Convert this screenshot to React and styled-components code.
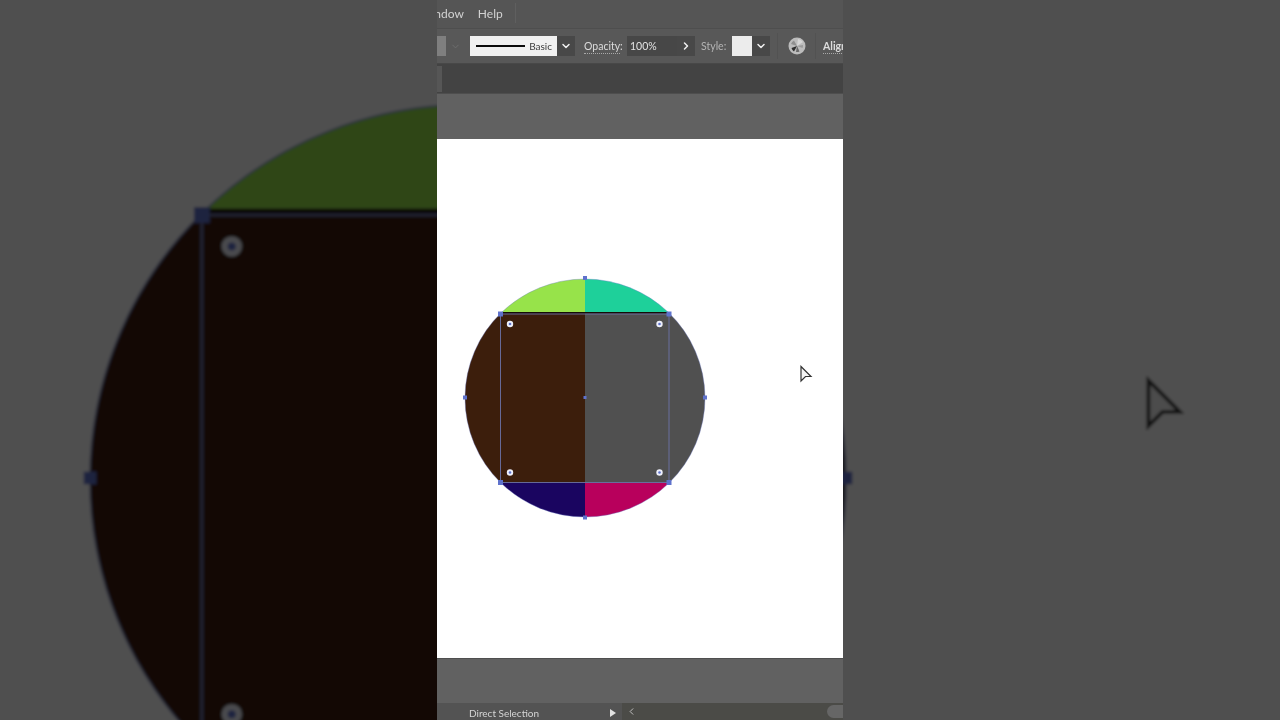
import { ChevronDown, ChevronRight, ChevronLeft } from 'lucide-react';
import styled, { createGlobalStyle } from 'styled-components';

const Global = createGlobalStyle`
  html, body {
    margin: 0;
    height: 100%;
    background: #4f4f4f;
    overflow: hidden;
  }
  #root { height: 100%; }
`;

const Page = styled.main`
  display: grid;
  grid-template-columns: 437px 406px 437px;
  height: 720px;
  font-family: Lato, 'Liberation Sans', sans-serif;
`;

const Side = styled.svg`
  display: block;
  width: 437px;
  height: 720px;
`;

const Center = styled.section`
  display: flex;
  flex-direction: column;
  height: 720px;
  overflow: hidden;
  filter: blur(0.45px);
`;

const MenuBar = styled.nav`
  height: 28px;
  box-sizing: border-box;
  padding-bottom: 2px;
  display: flex;
  align-items: center;
  background: #555555;
  overflow: hidden;
  flex: none;
`;

const MenuItem = styled.span`
  font-size: 12px;
  color: #d2d2d2;
  margin-left: ${(p) => p.$left || 0}px;
`;

const MenuDivider = styled.span`
  width: 1px;
  height: 20px;
  margin-left: 12px;
  background: #5f5f5f;
`;

const ControlBar = styled.div`
  height: 36px;
  flex: none;
  display: flex;
  align-items: center;
  background: #585858;
  border-top: 1px solid #4e4e4e;
  border-bottom: 1px solid #484848;
  box-sizing: border-box;
  overflow: hidden;
  white-space: nowrap;
`;

const FillBlock = styled.div`
  width: 9px;
  height: 20px;
  background: #7f7f7f;
  flex: none;
`;

const Arrow = styled.div`
  width: ${(p) => p.$w || 18}px;
  height: 20px;
  flex: none;
  display: flex;
  align-items: center;
  justify-content: center;
  background: ${(p) => p.$bg || '#484848'};
  color: ${(p) => p.$color || '#f0f0f0'};
`;

const StrokeBox = styled.div`
  width: 87px;
  height: 20px;
  margin-left: 5px;
  flex: none;
  box-sizing: border-box;
  padding: 0 5px 0 6px;
  display: flex;
  align-items: center;
  justify-content: space-between;
  background: #f1f1f1;
  font-size: 10px;
  color: #3c3c3c;
`;

const StrokeLine = styled.span`
  width: 49px;
  height: 2px;
  background: #0c0c0c;
`;

const Label = styled.span`
  font-size: 10.5px;
  flex: none;
  width: ${(p) => p.$w}px;
  margin-left: ${(p) => p.$left}px;
  color: ${(p) => (p.$dim ? '#b4b4b4' : '#dcdcdc')};
  font-weight: ${(p) => (p.$bold ? 700 : 400)};
  border-bottom: ${(p) => (p.$dotted ? '1px dotted #a8a8a8' : 'none')};
  line-height: 14px;
`;

const PercentField = styled.div`
  width: 50px;
  height: 20px;
  margin-left: 7px;
  flex: none;
  box-sizing: border-box;
  padding-left: 3px;
  background: #474747;
  color: #e2e2e2;
  font-size: 10.5px;
  line-height: 20px;
`;

const StyleSwatch = styled.div`
  width: 20px;
  height: 20px;
  margin-left: 6px;
  flex: none;
  background: #ececec;
`;

const BarDivider = styled.span`
  width: 1px;
  height: 26px;
  flex: none;
  margin-left: ${(p) => p.$left}px;
  background: #525252;
`;

const WheelIcon = styled.svg`
  width: 18px;
  height: 18px;
  margin-left: 10px;
  flex: none;
`;

const GuideStrip = styled.div`
  height: 29px;
  flex: none;
  background: #434343;
  display: flex;
`;

const StripTab = styled.div`
  width: 5px;
  margin: 2px 0 1px;
  background: #565656;
`;

const Pasteboard = styled.div`
  height: ${(p) => p.$h}px;
  flex: none;
  background: #616161;
  box-sizing: border-box;
  border-top: ${(p) => (p.$edge ? '1px solid #4e4e4e' : 'none')};
`;

const Artboard = styled.svg`
  display: block;
  width: 406px;
  height: 519px;
  flex: none;
`;

const StatusBar = styled.footer`
  height: 17px;
  flex: none;
  display: flex;
  align-items: center;
  background: #535353;
  overflow: hidden;
`;

const StatusText = styled.span`
  width: 141px;
  margin-left: 32px;
  flex: none;
  font-size: 10px;
  color: #d4d4d4;
  line-height: 17px;
  padding-top: 4px;
`;

const PlayMark = styled.span`
  width: 0;
  height: 0;
  flex: none;
  border-left: 6px solid #e2e2e2;
  border-top: 4px solid transparent;
  border-bottom: 4px solid transparent;
  margin-top: 2px;
`;

const ScrollTrack = styled.div`
  margin-left: 6px;
  flex: 1;
  height: 17px;
  display: flex;
  align-items: center;
  justify-content: space-between;
  background: #4b4b47;
  color: #c8c8c8;
  padding-left: 4px;
`;

const ScrollThumb = styled.span`
  width: 16px;
  height: 13px;
  border-radius: 7px 0 0 7px;
  background: #666666;
`;

const HANDLE = '#5f72cc';

const Handle = ({ x, y, s = 5 }) => (
  <rect x={x - s / 2} y={y - s / 2} width={s} height={s} fill={HANDLE} />
);

const Corner = ({ x, y }) => (
  <g>
    <circle cx={x} cy={y} r={3.2} fill="#eef0fb" />
    <circle cx={x} cy={y} r={1.3} fill={HANDLE} />
  </g>
);

// the artwork in page coordinates, reused for the zoomed backdrop
const Scene = () => (
  <g>
    <rect x="-500" y="-500" width="2400" height="1800" fill="#ffffff" />
    <path d="M585 279A120 119 0 0 0 502 312L585 312Z" fill="#97e34a" />
    <path d="M585 279A120 119 0 0 1 668 312L585 312Z" fill="#1ed09a" />
    <path d="M502 312A120 119 0 0 0 501 483L585 483L585 312Z" fill="#3c1e0c" />
    <path d="M668 312A120 119 0 0 1 669 483L585 483L585 312Z" fill="#505050" />
    <path d="M501 483A120 119 0 0 0 585 517L585 483Z" fill="#1a0560" />
    <path d="M669 483A120 119 0 0 1 585 517L585 483Z" fill="#b8005c" />
    <ellipse cx="585" cy="398" rx="120" ry="119" fill="none" stroke="#6b78c8" strokeWidth="0.6" strokeOpacity="0.6" />
    <rect x="501" y="312" width="168" height="1.6" fill="#150c06" />
    <rect x="500.5" y="314" width="168.5" height="168.5" fill="none" stroke="#6c72a6" strokeWidth="0.9" />
    <Handle x={500.5} y={314} />
    <Handle x={669} y={314} />
    <Handle x={500.5} y={482.5} />
    <Handle x={669} y={482.5} />
    <Handle x={585} y={278} s={4} />
    <Handle x={585} y={517.5} s={4} />
    <Handle x={465} y={397.5} s={4} />
    <Handle x={705} y={397.5} s={4} />
    <Handle x={585} y={397.5} s={3} />
    <Corner x={510} y={324} />
    <Corner x={659.5} y={324} />
    <Corner x={510} y={472.5} />
    <Corner x={659.5} y={472.5} />
    <path
      d="M801 366.5L811 376.5L805.5 376.5L801 381Z"
      fill="#f4f4f4"
      stroke="#333333"
      strokeWidth="1.2"
    />
  </g>
);

const ZoomedSide = ({ name, left }) => (
  <Side viewBox={`${left} 0 437 720`}>
    <defs>
      <filter
        id={name}
        filterUnits="userSpaceOnUse"
        x={left - 20}
        y="-20"
        width="477"
        height="760"
      >
        <feGaussianBlur stdDeviation="1.8" />
      </filter>
    </defs>
    <g filter={`url(#${name})`}>
      <g transform="translate(468 478) scale(3.15) translate(-585 -397.5)">
        <Scene />
      </g>
    </g>
    <rect x={left} y="0" width="437" height="720" fill="#000000" opacity="0.69" />
  </Side>
);

const App = () => {
  return (
    <Page>
      <Global />
      <ZoomedSide name="blur-left" left={0} />
      <Center>
        <MenuBar>
          <MenuItem $left={-18}>Window</MenuItem>
          <MenuItem $left={14}>Help</MenuItem>
          <MenuDivider />
        </MenuBar>
        <ControlBar>
          <FillBlock />
          <Arrow $w={19} $bg="#585858" $color="#6e6e6e">
            <ChevronDown size={11} strokeWidth={2} />
          </Arrow>
          <StrokeBox>
            <StrokeLine />
            Basic
          </StrokeBox>
          <Arrow>
            <ChevronDown size={12} strokeWidth={3} />
          </Arrow>
          <Label $left={9} $w={36} $dotted>
            Opacity:
          </Label>
          <PercentField>100%</PercentField>
          <Arrow>
            <ChevronRight size={12} strokeWidth={3} />
          </Arrow>
          <Label $left={6} $w={25} $dim>
            Style:
          </Label>
          <StyleSwatch />
          <Arrow>
            <ChevronDown size={12} strokeWidth={3} />
          </Arrow>
          <BarDivider $left={7} />
          <WheelIcon viewBox="0 0 18 18">
            <circle cx="9" cy="9" r="8.5" fill="#bcbcbc" />
            <path d="M9 9L15 5A7 7 0 0 0 10 2Z" fill="#d6d6d6" />
            <path d="M9 9L3.5 11A6 6 0 0 0 6 14.5Z" fill="#2e2e2e" />
            <path d="M9 9L8 15A6 6 0 0 0 11.5 14.5Z" fill="#6a6a6a" />
            <path d="M9 9L14.5 11A6 6 0 0 0 15 8Z" fill="#9a9a9a" />
            <path d="M9 9L6 3.5A6 6 0 0 0 3 7Z" fill="#909090" />
          </WheelIcon>
          <BarDivider $left={9} />
          <Label $left={7} $w={27} $bold $dotted>
            Align
          </Label>
        </ControlBar>
        <GuideStrip>
          <StripTab />
        </GuideStrip>
        <Pasteboard $h={46} $edge />
        <Artboard viewBox="437 139 406 519">
          <Scene />
        </Artboard>
        <Pasteboard $h={45} $edge />
        <StatusBar>
          <StatusText>Direct Selection</StatusText>
          <PlayMark />
          <ScrollTrack>
            <ChevronLeft size={11} strokeWidth={2} />
            <ScrollThumb />
          </ScrollTrack>
        </StatusBar>
      </Center>
      <ZoomedSide name="blur-right" left={843} />
    </Page>
  );
};

export default App;
